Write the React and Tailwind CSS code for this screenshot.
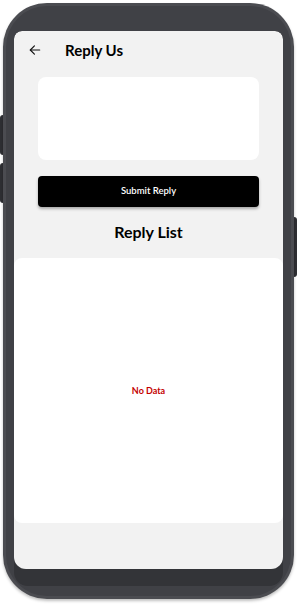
import React from 'react';

function BackArrow() {
    return (
        <svg width="14" height="14" viewBox="0 0 24 24" fill="none" stroke="#111" strokeWidth="2" strokeLinecap="round" strokeLinejoin="round">
            <path d="M20 12H4" />
            <path d="M11 5l-7 7 7 7" />
        </svg>
    );
}

export default function App() {
    return (
        <div className="relative w-[300px] h-[604px] bg-white" style={{ fontFamily: 'Lato, "Noto Sans", sans-serif' }}>
            {/* side buttons */}
            <div className="absolute left-[0px] top-[115px] w-[3px] h-[40px] bg-[#2e2f33] rounded-l-sm" />
            <div className="absolute left-[0px] top-[163px] w-[3px] h-[40px] bg-[#2e2f33] rounded-l-sm" />
            <div className="absolute left-[294px] top-[217px] w-[3px] h-[60px] bg-[#2e2f33] rounded-r-sm" />

            <div className="absolute left-[3px] top-[3px] w-[291px] h-[596px] rounded-[44px] bg-[#4b4c51] p-[3px] shadow-[0_2px_3px_rgba(0,0,0,0.25)]">
                <div className="w-full h-full rounded-[41px] bg-[#404146] px-[8px] pt-[25px] pb-[10px] flex flex-col">
                    <div className="flex-1 rounded-t-[8px] rounded-b-[14px] bg-[#333438] overflow-hidden flex flex-col">
                        <div className="h-[538px] bg-[#f2f2f2] rounded-t-[8px] rounded-b-[12px] flex flex-col">
                            <div className="flex items-center h-[38px] pl-[14px]">
                                <BackArrow />
                                <span className="ml-[23px] text-[15px] font-bold text-black">Reply Us</span>
                            </div>
                            <div className="mx-[24px] mt-[8px] h-[83px] bg-white rounded-[8px]" />
                            <button className="mx-[24px] mt-[16px] h-[31px] bg-black rounded-[4px] text-white text-[9.5px] font-semibold shadow-[0_2px_3px_rgba(0,0,0,0.3)]">
                                Submit Reply
                            </button>
                            <div className="mt-[13px] text-center text-[16px] font-bold text-black leading-[24px]">Reply List</div>
                            <div className="mt-[14px] h-[265px] bg-white rounded-[8px] flex items-center justify-center">
                                <span className="text-[9px] font-bold text-[#c40000]">No Data</span>
                            </div>
                        </div>
                    </div>
                </div>
            </div>
        </div>
    );
}
